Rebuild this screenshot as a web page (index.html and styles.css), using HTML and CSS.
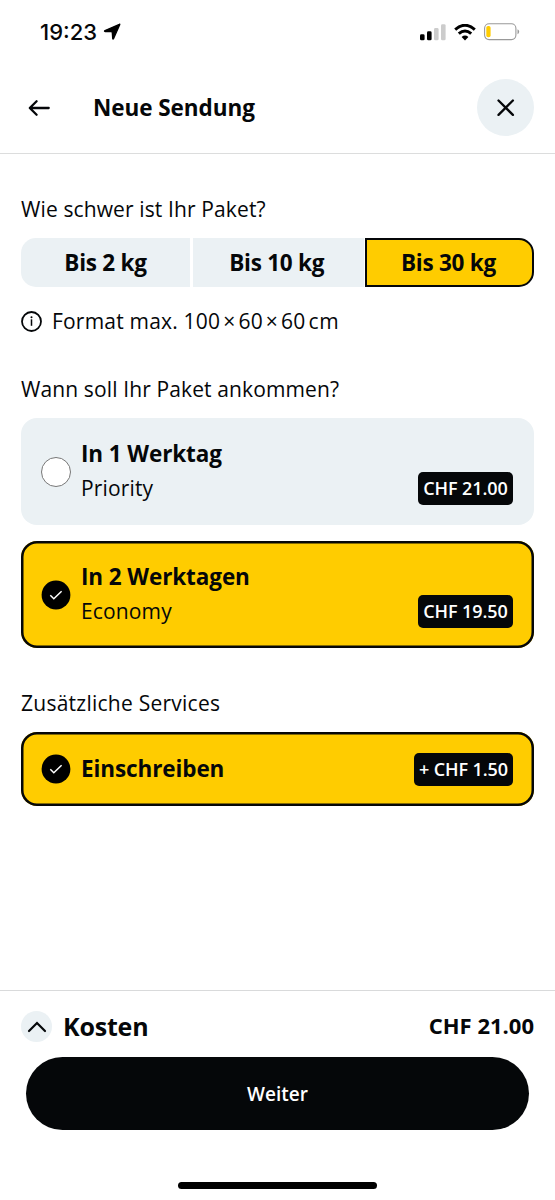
FILE: index.html
```html
<!DOCTYPE html>
<html lang="de">
<head>
<meta charset="utf-8">
<meta name="viewport" content="width=device-width">
<title>Neue Sendung</title>
<link rel="stylesheet" href="styles.css">
</head>
<body>
<div class="screen">
  <div class="status">
    <span class="time">19:23</span>
    <svg class="location" width="18" height="18" viewBox="0 0 18 18"><path d="M16.400 1.300Q17 .8 16.700 1.700L10.500 15.700Q9.900 16.700 9.700 15.500L9.300 9.600Q9.200 8.800 8.400 8.700L2 8.500Q1 8.200 2 7.600Z" stroke="#000" stroke-width="1.300" stroke-linejoin="round"/></svg>
    <span class="spacer"></span>
    <svg class="signal" width="26" height="17" viewBox="0 0 26 17"><rect x="0" y="10.300" width="4.600" height="6" rx="1.400"/><rect x="7" y="7.300" width="4.600" height="9" rx="1.400"/><g fill="#ccc"><rect x="14" y="4" width="4.600" height="12.300" rx="1.400"/><rect x="21" y=".2" width="4.600" height="16.100" rx="1.400"/></g></svg>
    <svg class="wifi" width="22" height="17" viewBox="0 0 22 17"><g fill="none" stroke="#000" stroke-width="3"><path d="M1.200 5.600Q11-3 20.800 5.600"/><path d="M4.800 9.700Q11 4.200 17.200 9.700"/></g><path d="M7.600 12.900Q11 10.200 14.400 12.900L11 16.400Z"/></svg>
    <svg class="battery" width="36" height="18" viewBox="0 0 36 18"><rect x=".6" y=".8" width="31.300" height="15.800" rx="4.500" fill="#fff" stroke="#999" stroke-width="1.100"/><rect x="2.300" y="3" width="4.300" height="11.300" rx="1.800" fill="#fc0"/><path d="M33.500 6.300q1.700.6 1.700 2.500t-1.700 2.500Z" fill="#999"/></svg>
  </div>
  <header class="header">
    <svg class="back" width="22" height="18" viewBox="0 0 22 18"><path d="M20.700 9H1.900M8.600 2.200 1.800 9l6.800 6.800"/></svg>
    <h1 class="title">Neue Sendung</h1>
    <button class="close" aria-label="Schliessen"><svg width="18" height="18" viewBox="0 0 18 18"><path d="m1.500 1.500 14.400 14.400m0-14.400-14.400 14.400"/></svg></button>
  </header>
  <main class="content">
    <h2 class="label">Wie schwer ist Ihr Paket?</h2>
    <div class="segments">
      <button class="segment">Bis 2 kg</button>
      <button class="segment wide">Bis 10 kg</button>
      <button class="segment active">Bis 30 kg</button>
    </div>
    <p class="hint">
      <svg width="21" height="21" viewBox="0 0 21 21"><circle cx="10.500" cy="10.500" r="9.500" fill="none" stroke="#050709" stroke-width="1.800"/><path d="M10.500 8.300v6.500" stroke="#050709" stroke-width="1.500"/><circle cx="10.500" cy="6.200" r="1"/></svg>
      <span class="hint-text">Format max. 100<span class="times">×</span>60<span class="times">×</span>60<span class="unit">cm</span></span>
    </p>
    <h2 class="label l-when">Wann soll Ihr Paket ankommen?</h2>
    <div class="options">
      <div class="card">
        <span class="radio"></span>
        <div class="names"><b class="name">In 1 Werktag</b><span class="kind">Priority</span></div>
        <span class="price">CHF 21.00</span>
      </div>
      <div class="card selected">
        <svg class="check" width="30" height="30" viewBox="0 0 30 30"><circle cx="15" cy="15" r="14.400"/><path d="m9.300 15.300 3.500 3.500 7.800-7.600"/></svg>
        <div class="names"><b class="name">In 2 Werktagen</b><span class="kind">Economy</span></div>
        <span class="price">CHF 19.50</span>
      </div>
    </div>
    <h2 class="label l-services">Zusätzliche Services</h2>
    <div class="card selected single">
      <svg class="check" width="30" height="30" viewBox="0 0 30 30"><circle cx="15" cy="15" r="14.400"/><path d="m9.300 15.300 3.500 3.500 7.800-7.600"/></svg>
      <div class="names"><b class="name">Einschreiben</b></div>
      <span class="price plus">+ CHF 1.50</span>
    </div>
  </main>
  <footer class="footer">
    <div class="costs">
      <span class="toggle"><svg width="20" height="12" viewBox="0 0 20 12"><path d="m2 10 8-8 8 8"/></svg></span>
      <span class="costs-label">Kosten</span>
      <span class="total">CHF 21.00</span>
    </div>
    <button class="next">Weiter</button>
    <div class="home"></div>
  </footer>
</div>
</body>
</html>
```
FILE: styles.css
```css
* { box-sizing: border-box; }
body { margin: 0; background: #fff; color: #050709; font-family: "Open Sans", "Noto Sans", sans-serif; }
h1, h2, p { margin: 0; }
button { font: inherit; color: inherit; border: 0; padding: 0; }
svg { display: block; flex: none; }
.screen { width: 555px; height: 1200px; display: flex; flex-direction: column; white-space: nowrap; overflow: hidden; }

.status { height: 62px; flex: none; display: flex; align-items: center; padding: 2px 35px 0 40px; }
.time { font: 500 22px/30px Inter, sans-serif; width: 63px; }
.spacer { flex: 1; }
.wifi { margin: 0 8px; }

.header { height: 92px; flex: none; display: flex; align-items: center; padding: 0 21px 0 28px; border-bottom: 1.5px solid #dcdddd; }
.back, .close svg { fill: none; stroke: #050709; stroke-width: 2.300; stroke-linecap: round; stroke-linejoin: round; }
.title { flex: 1; margin-left: 43px; font-size: 22.500px; line-height: 30px; font-weight: 740; letter-spacing: -.05px; }
.close { width: 57px; height: 57px; border-radius: 50%; background: #ebf1f4; display: grid; place-items: center; }

.content { flex: 1; padding: 40px 21px 0; }
.label { font-size: 21px; line-height: 30px; font-weight: 400; letter-spacing: .12px; }
.l-services { letter-spacing: .25px; }
.segments { display: grid; grid-template-columns: 169px 172px 169px; margin-top: 14px; height: 49px; width: 513px; column-gap: 1.500px; }
.segment { background: #ebf1f4; font-size: 22.500px; font-weight: 740; letter-spacing: -.25px; line-height: 30px; border-radius: 15px 0 0 15px; }
.segment.wide { border-radius: 0; margin-left: 1.500px; padding-right: 3px; }
.segment.active { border: 2.500px solid #050709; background: #fc0; border-radius: 0 15px 15px 0; padding-right: 2px; }
.hint { display: flex; align-items: center; gap: 10px; margin-top: 19px; font-size: 21px; line-height: 30px; letter-spacing: .2px; }
.times { margin: 0 3px; }
.unit { margin-left: 3px; letter-spacing: .6px; }
.l-when { margin-top: 38px; }
.options { display: flex; flex-direction: column; gap: 16px; margin-top: 14px; }
.card { width: 513px; height: 107px; border-radius: 16px; background: #ebf1f4; padding: 0 21px 0 20px; display: flex; align-items: center; gap: 10px; }
.card.selected { background: #fc0; box-shadow: inset 0 0 0 2.500px #050709; }
.card.single { height: 74px; }
.radio { width: 30px; height: 30px; border-radius: 50%; background: #fff; border: 1px solid #777; }
.names { flex: 1; display: flex; flex-direction: column; align-items: flex-start; padding-bottom: 2px; }
.name { font-size: 22.500px; font-weight: 740; letter-spacing: -.1px; line-height: 35px; }
.kind { font-size: 21px; line-height: 35px; letter-spacing: .15px; }
.price { width: 95px; height: 33px; border-radius: 5px; background: #050709; color: #fff; font-size: 18px; font-weight: 600; letter-spacing: -.1px; line-height: 33px; text-align: center; align-self: flex-end; margin-bottom: 20px; }
.price.plus { width: 99px; }
.check path { fill: none; stroke: #fff; stroke-width: 1.500; }
.l-services { margin-top: 40px; }
.single { margin-top: 14px; }

.footer { height: 210px; flex: none; border-top: 1.500px solid #d9dadb; display: flex; flex-direction: column; align-items: center; }
.costs { height: 66px; width: 100%; display: flex; align-items: center; padding: 5px 21px 0; }
.toggle { width: 31px; height: 31px; border-radius: 50%; background: #ebf1f4; display: grid; place-items: center; }
.toggle path { fill: none; stroke: #050709; stroke-width: 2.200; stroke-linecap: round; }
.costs-label { flex: 1; margin-left: 11px; font-size: 25px; font-weight: 740; letter-spacing: -.2px; padding-bottom: 2px; }
.total { font-size: 22px; font-weight: 700; padding-bottom: 3px; }
.next { width: 503px; height: 73px; border-radius: 37px; background: #050709; color: #fff; font-size: 19px; font-weight: 600; }
.home { width: 199px; height: 7px; border-radius: 4px; background: #000; margin-top: 52px; }
```
